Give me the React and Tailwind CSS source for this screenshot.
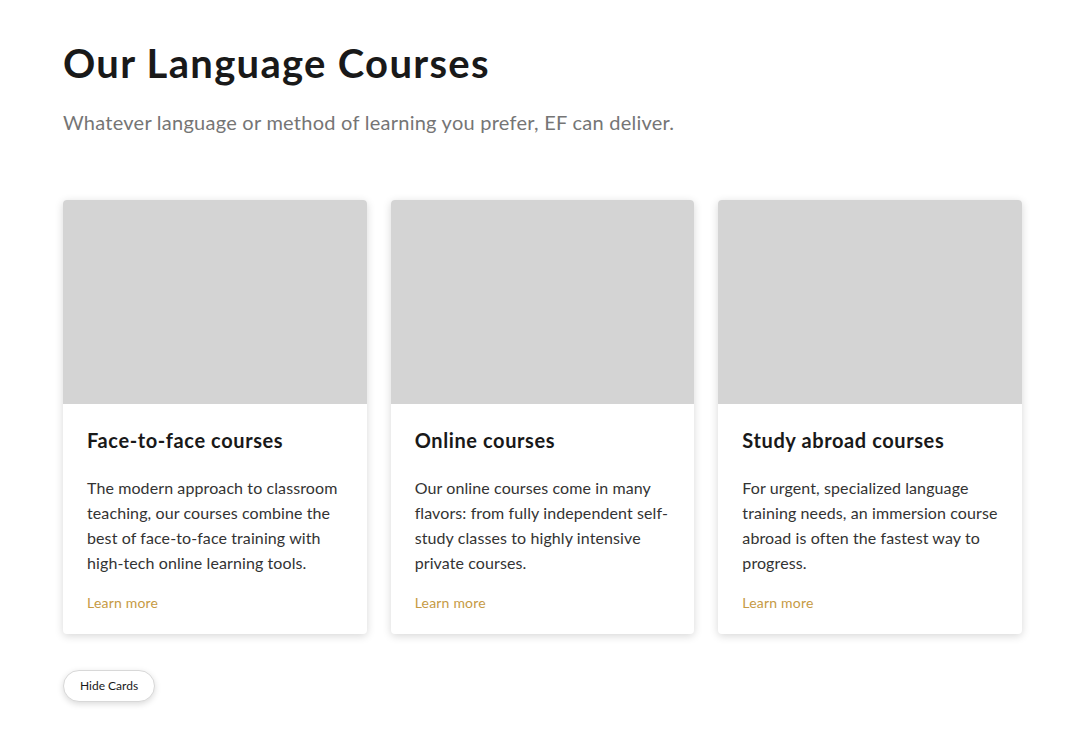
import React from "react";

const cards = [
  {
    title: "Face-to-face courses",
    body: "The modern approach to classroom teaching, our courses combine the best of face-to-face training with high-tech online learning tools.",
  },
  {
    title: "Online courses",
    body: "Our online courses come in many flavors: from fully independent self-study classes to highly intensive private courses.",
  },
  {
    title: "Study abroad courses",
    body: "For urgent, specialized language training needs, an immersion course abroad is often the fastest way to progress.",
  },
];

export default function App() {
  return (
    <div className="min-h-[749px] bg-white px-[63px] pt-[37px] text-[#191919]" style={{ fontFamily: "Lato, 'Open Sans', sans-serif" }}>
      <h1 className="text-[40px] font-bold leading-[52px] tracking-[1.3px] text-[#191919]">Our Language Courses</h1>
      <p className="mt-[19px] text-[20px] leading-[28px] tracking-[0.25px] text-[#757575]">
        Whatever language or method of learning you prefer, EF can deliver.
      </p>
      <div className="mt-[64px] grid w-[959px] grid-cols-3 gap-[24px]">
        {cards.map((c) => (
          <div key={c.title} className="overflow-hidden rounded-[4px] bg-white shadow-[0_2px_8px_rgba(0,0,0,0.16)]">
            <div className="h-[204px] bg-[#d4d4d4]" />
            <div className="px-[24px] pt-[24px] pb-[22px]">
              <h2 className="text-[20px] font-bold leading-[24px] tracking-[0.6px] text-[#191919]">{c.title}</h2>
              <p className="mt-[23px] text-[16px] font-normal leading-[25px] tracking-[0.1px] text-[#333333]">{c.body}</p>
              <a className="mt-[19px] block text-[14px] leading-[18px] tracking-[0.2px] text-[#c69a44]" href="#">
                Learn more
              </a>
            </div>
          </div>
        ))}
      </div>
      <button className="mt-[36px] h-[32px] rounded-full border border-[#d8d8d8] bg-white px-[16px] text-[12px] text-[#191919] shadow-[0_2px_6px_rgba(0,0,0,0.15)]">
        Hide Cards
      </button>
    </div>
  );
}
